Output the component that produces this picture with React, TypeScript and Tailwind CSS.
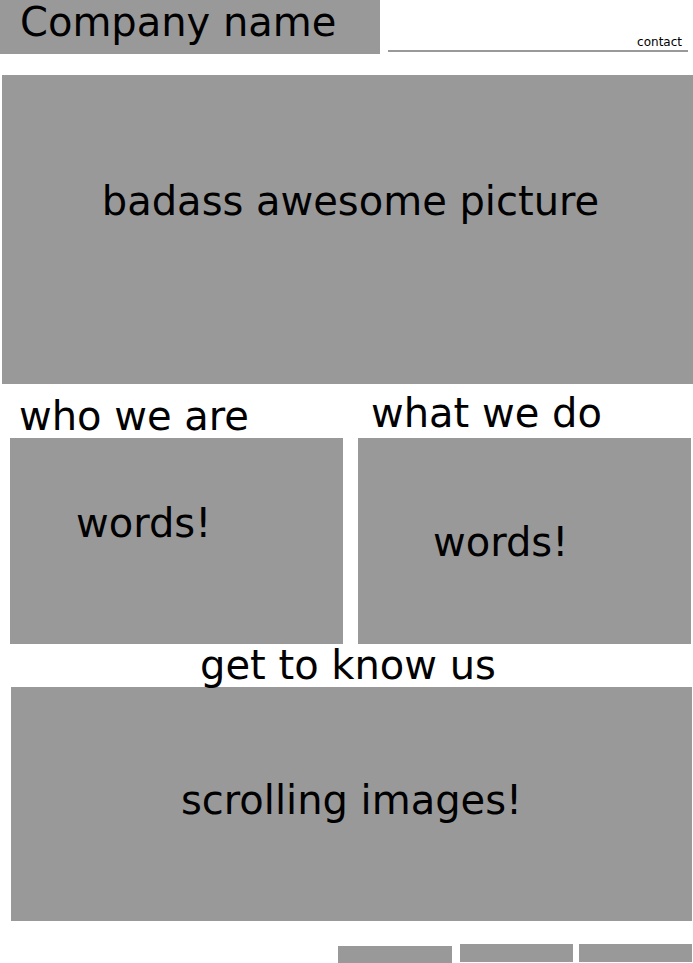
export default function App() {
  return (
    <div
      className="relative w-[693px] h-[963px] overflow-hidden bg-white text-black"
      style={{ fontFamily: '"DejaVu Sans", Verdana, sans-serif' }}
    >
      {/* Header */}
      <div className="flex h-[54px]">
        <div className="w-[380px] h-[54px] bg-[#999999] pl-[20px] pt-[2px] text-[40px] leading-none">
          Company name
        </div>
        <div className="ml-[8px] w-[300px] flex flex-col">
          <div className="pt-[36px] pr-[6px] text-right text-[12px] leading-none">contact</div>
          <div className="mt-[2px] h-[2px] bg-[#999999]" />
        </div>
      </div>

      {/* Hero */}
      <div className="mt-[21px] ml-[2px] w-[691px] h-[309px] bg-[#999999] pt-[106px] pl-[6px] text-center text-[40px] leading-none">
        badass awesome picture
      </div>

      {/* Two columns */}
      <div className="mt-[9px] pl-[10px] flex gap-[15px]">
        <div className="w-[333px] flex flex-col">
          <div className="h-[45px] pt-[3px] pl-[9px] text-[40px] leading-none">who we are</div>
          <div className="h-[206px] bg-[#999999] pt-[65px] pl-[66px] text-[40px] leading-none">words!</div>
        </div>
        <div className="w-[333px] flex flex-col">
          <div className="h-[45px] pl-[13px] text-[40px] leading-none">what we do</div>
          <div className="h-[206px] bg-[#999999] pt-[84px] pl-[75px] text-[40px] leading-none">words!</div>
        </div>
      </div>

      {/* Get to know us */}
      <div className="mt-[1px] h-[42px] pl-[3px] text-center text-[40px] leading-none">get to know us</div>
      <div className="ml-[11px] w-[681px] h-[234px] bg-[#999999] pt-[93px] text-center text-[40px] leading-none">
        scrolling images!
      </div>

      {/* Footer buttons */}
      <div className="mt-[23px] pr-[1px] flex justify-end items-start">
        <div className="mt-[2px] w-[114px] h-[17px] bg-[#999999]" />
        <div className="ml-[8px] w-[113px] h-[18px] bg-[#999999]" />
        <div className="ml-[6px] w-[113px] h-[18px] bg-[#999999]" />
      </div>
    </div>
  );
}
